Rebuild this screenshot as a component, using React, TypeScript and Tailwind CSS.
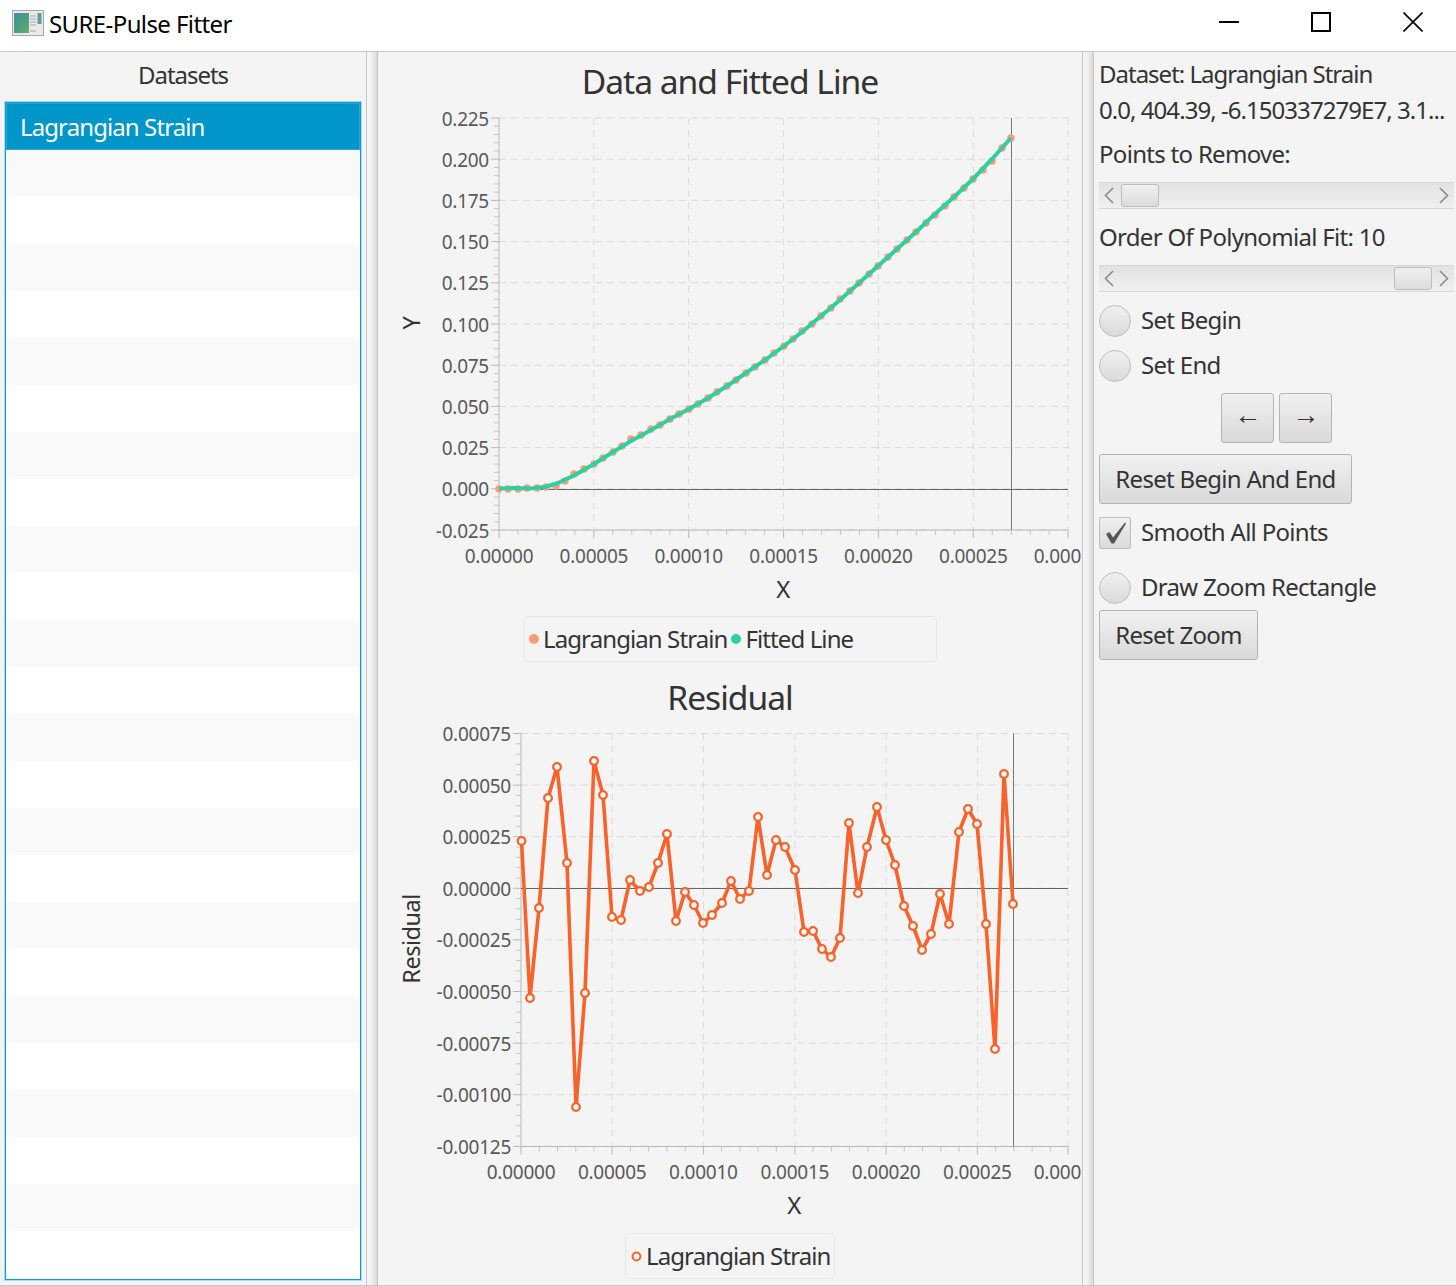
import React from "react";

const residual: [number, number][] = [
  [521.5, 841], [530, 998], [539, 908], [548, 798], [557, 767], [567, 863], [576, 1107], [585, 993],
  [594, 761], [603, 795], [612, 917], [621, 920], [630, 880], [640, 891], [649, 887], [658, 863],
  [667, 834], [676, 921], [685, 892], [694, 905], [703, 923], [712, 915], [722, 903], [731, 881],
  [740, 899], [749, 891], [758, 817], [767, 875], [776, 840], [785, 847], [795, 870], [804, 932],
  [813, 931], [822, 949], [831, 957], [840, 938], [849, 823], [858, 893], [867, 847], [877, 807],
  [886, 840], [895, 865], [904, 906], [913, 926], [922, 950], [931, 934], [940, 894], [949, 924],
  [959, 832], [968, 809], [977, 824], [986, 924], [995, 1049], [1004, 774], [1013, 904],
];

const strain: [number, number][] = [
  [499, 489], [508, 489], [518, 489], [527, 488], [537, 488], [546, 487], [556, 486], [565, 481],
  [574, 474], [584, 469], [594, 464], [603, 458], [613, 452], [622, 446], [631, 439], [641, 435],
  [651, 429], [660, 425], [670, 419], [679, 414], [689, 409], [698, 404], [708, 398], [717, 392],
  [727, 386], [736, 380], [746, 373], [755, 367], [765, 360], [774, 353], [784, 346], [793, 339],
  [802, 331], [812, 324], [821, 316], [831, 308], [840, 299], [850, 291], [859, 283], [869, 274],
  [878, 266], [888, 257], [897, 249], [907, 240], [916, 232], [926, 223], [935, 215], [945, 206],
  [954, 197], [964, 188], [973, 179], [983, 170], [992, 161], [1002, 148], [1011, 138],
];

const fitted: [number, number][] = [
  [499, 488.5], [515, 488], [530, 488.5], [545, 487], [558, 483], [575, 475], [594, 464], [613, 452],
  [631, 441], [651, 430], [670, 419], [689, 409], [708, 398], [727, 386], [746, 373], [765, 360],
  [784, 346], [802, 332], [821, 316], [840, 300], [859, 283], [878, 266], [897, 249], [916, 232],
  [935, 214], [954, 197], [973, 179], [992, 159], [1011, 138],
];

const toPoints = (pts: [number, number][]) => pts.map((p) => p.join(",")).join(" ");

type ChartProps = {
  viewBox: string;
  left: number;
  top: number;
  bottom: number;
  xTicks: number[];
  xLabels: string[];
  yTicks: number[];
  yLabels: string[];
  zeroY: number;
  markerX: number;
  xLabelX: number;
  xLabelY: number;
  yTitle: string;
  yTitleY: number;
  children: React.ReactNode;
};

const RIGHT = 1068;

function Chart(props: ChartProps) {
  const { left, top, bottom, xTicks, yTicks } = props;
  const xStep = (xTicks[1] - xTicks[0]) / 5;
  const yStep = (yTicks[1] - yTicks[0]) / 5;
  return (
    <svg viewBox={props.viewBox} className="block w-[703px] h-[510px] overflow-hidden">
      {/* grid */}
      {yTicks.map((y) => (
        <line key={y} x1={left} x2={RIGHT} y1={y} y2={y} stroke="#dadada" strokeDasharray="7 5" />
      ))}
      {xTicks.slice(1).map((x) => (
        <line key={x} x1={x} x2={x} y1={top} y2={bottom} stroke="#dadada" strokeDasharray="7 5" />
      ))}
      {/* axes */}
      <line x1={left} x2={left} y1={top} y2={bottom} stroke="#b8b8b8" />
      <line x1={left} x2={RIGHT} y1={bottom} y2={bottom} stroke="#b8b8b8" />
      {yTicks.map((y, i) => (
        <g key={y}>
          <line x1={left - 8} x2={left} y1={y} y2={y} stroke="#b8b8b8" />
          {i < yTicks.length - 1 &&
            [1, 2, 3, 4].map((n) => (
              <line key={n} x1={left - 5} x2={left} y1={y + yStep * n} y2={y + yStep * n} stroke="#c4c4c4" />
            ))}
          <text x={left - 10} y={y + 7.5} textAnchor="end" className="fill-[#595959] text-[19px] tracking-[-0.25px]">
            {props.yLabels[i]}
          </text>
        </g>
      ))}
      {xTicks.map((x, i) => (
        <g key={x}>
          <line x1={x} x2={x} y1={bottom} y2={bottom + 8} stroke="#b8b8b8" />
          {i < xTicks.length - 1 &&
            [1, 2, 3, 4].map((n) => (
              <line key={n} x1={x + xStep * n} x2={x + xStep * n} y1={bottom} y2={bottom + 5} stroke="#c4c4c4" />
            ))}
          <text x={x} y={bottom + 32.6} textAnchor="middle" className="fill-[#595959] text-[19px] tracking-[-0.25px]">
            {props.xLabels[i]}
          </text>
        </g>
      ))}
      {/* zero lines */}
      <line x1={left} x2={RIGHT} y1={props.zeroY} y2={props.zeroY} stroke="#666666" />
      <line x1={props.markerX} x2={props.markerX} y1={top} y2={bottom} stroke="#777777" />
      <text x={props.xLabelX} y={props.xLabelY} textAnchor="middle" className="fill-[#333333] text-[24px]">
        X
      </text>
      <text
        transform={`rotate(-90 420 ${props.yTitleY})`}
        x={420}
        y={props.yTitleY}
        textAnchor="middle"
        className="fill-[#333333] text-[23.5px] tracking-[-0.5px]"
      >
        {props.yTitle}
      </text>
      {props.children}
    </svg>
  );
}

function ScrollBar({ thumbRight }: { thumbRight?: boolean }) {
  return (
    <div className="flex items-center h-[27px] border-y border-[#d6d6d6] bg-linear-to-b from-[#e2e2e2] to-[#f0f0f0]">
      <svg width="22" height="25" viewBox="0 0 22 25" className="shrink-0">
        <path d="M14 5 L6.5 12.5 L14 20" fill="none" stroke="#8a8a8a" strokeWidth="1.6" />
      </svg>
      <div className={`flex-1 flex ${thumbRight ? "justify-end" : "justify-start"}`}>
        <div className="w-[38px] h-[23px] rounded-[3px] border border-[#bdbdbd] bg-linear-to-b from-[#f0f0f0] to-[#dcdcdc]" />
      </div>
      <svg width="22" height="25" viewBox="0 0 22 25" className="shrink-0">
        <path d="M8 5 L15.5 12.5 L8 20" fill="none" stroke="#8a8a8a" strokeWidth="1.6" />
      </svg>
    </div>
  );
}

function Radio({ label, className }: { label: string; className: string }) {
  return (
    <div className={`flex items-center h-[32px] gap-[10px] ${className}`}>
      <div className="w-[32px] h-[32px] rounded-full border border-[#c0c0c0] bg-linear-to-b from-[#f0f0f0] to-[#dadada]" />
      <span className="pb-[2px]">{label}</span>
    </div>
  );
}

function FxButton({ children, className }: { children: React.ReactNode; className: string }) {
  return (
    <div
      className={`flex items-center justify-center h-[50px] rounded-[3px] border border-[#b4b4b4] bg-linear-to-b from-[#f1f1f1] to-[#d9d9d9] ${className}`}
    >
      {children}
    </div>
  );
}

function Divider() {
  return (
    <div className="w-[12px] shrink-0 border-x border-[#c6c6c6] bg-linear-to-r from-[#f7f7f7] via-[#efefef] to-[#d9d9d9]" />
  );
}

export default function App() {
  const rows = Array.from({ length: 24 }, (_, i) => i);
  return (
    <div className="flex flex-col w-[1456px] h-[1286px] overflow-hidden bg-[#f4f4f4] text-[24px] tracking-[-0.7px] text-[#333333] font-['Noto_Sans',sans-serif]">
      {/* Title bar */}
      <div className="flex items-center h-[52px] shrink-0 bg-white border-b border-[#c8c8c8] pl-[12px] pr-[33px]">
        <svg width="32" height="26" viewBox="0 0 32 26" className="shrink-0 -mt-[5px]">
          <defs>
            <linearGradient id="appIcon" x1="0" y1="0" x2="1" y2="1">
              <stop offset="0" stopColor="#3f8fa8" />
              <stop offset="0.6" stopColor="#4f9f78" />
              <stop offset="1" stopColor="#6fae62" />
            </linearGradient>
          </defs>
          <rect x="0.5" y="0.5" width="31" height="25" fill="#e9e9e9" stroke="#a9a9a9" />
          <rect x="2" y="3" width="15" height="20" fill="url(#appIcon)" />
          <path d="M18 6h6M18 9h6M18 12h6M18 15h6M18 21h6" stroke="#bdbdbd" strokeWidth="1.4" />
          <rect x="25.5" y="3" width="4" height="11" fill="#5f9e98" />
        </svg>
        <span className="ml-[5px] text-black -mt-[4px] tracking-[-0.6px]">SURE-Pulse Fitter</span>
        <div className="flex items-center gap-[72px] ml-auto -mt-[7px]">
          <svg width="20" height="20" viewBox="0 0 20 20">
            <line x1="0" x2="20" y1="10" y2="10" stroke="#000" strokeWidth="2" />
          </svg>
          <svg width="20" height="20" viewBox="0 0 20 20">
            <rect x="1" y="1" width="18" height="18" fill="none" stroke="#000" strokeWidth="2" />
          </svg>
          <svg width="20" height="20" viewBox="0 0 20 20">
            <path d="M0.5 0.5 L19.5 19.5 M19.5 0.5 L0.5 19.5" stroke="#000" strokeWidth="1.6" />
          </svg>
        </div>
      </div>

      <div className="flex flex-1 min-h-0 border-b border-[#c8c8c8]">
        {/* Datasets */}
        <div className="flex flex-col w-[366px] shrink-0 px-[5px]">
          <div className="flex items-center justify-center h-[50px] pb-[4px] tracking-[-1.05px]">Datasets</div>
          <div className="flex flex-col h-[1178px] bg-white border border-[#039ed3] shadow-[0_0_0_1px_#a9dcf0] w-[356px]">
            <div className="flex items-center h-[47px] shrink-0 pl-[13px] bg-[#0096c9] border border-[#2aa8d2] text-white tracking-[-0.9px]">
              Lagrangian Strain
            </div>
            {rows.map((i) => (
              <div key={i} className={`h-[47px] shrink-0 ${i % 2 === 0 ? "bg-[#f9f9f9]" : "bg-white"}`} />
            ))}
          </div>
        </div>

        <Divider />

        {/* Charts */}
        <div className="flex flex-col w-[704px] shrink-0">
          <div className="flex items-center justify-center h-[48px] pt-[10px] text-[33.6px] tracking-[-1px]">Data and Fitted Line</div>
          <Chart
            viewBox="378 100 703 510"
            left={499}
            top={118}
            bottom={530}
            xTicks={[499, 593.9, 688.7, 783.6, 878.4, 973.3, 1068]}
            xLabels={["0.00000", "0.00005", "0.00010", "0.00015", "0.00020", "0.00025", "0.00030"]}
            yTicks={[118, 159.2, 200.4, 241.6, 282.8, 324, 365.2, 406.4, 447.6, 488.8, 530]}
            yLabels={["0.225", "0.200", "0.175", "0.150", "0.125", "0.100", "0.075", "0.050", "0.025", "0.000", "-0.025"]}
            zeroY={489.5}
            markerX={1011.5}
            xLabelX={783}
            xLabelY={598}
            yTitle="Y"
            yTitleY={323}
          >
            {strain.map(([x, y]) => (
              <circle key={x} cx={x} cy={y} r="3.7" fill="#ff9a78" />
            ))}
            <polyline points={toPoints(fitted)} fill="none" stroke="#2dd0a0" strokeWidth="4" strokeLinejoin="round" />
          </Chart>
          <div className="flex items-center self-center w-[414px] h-[46px] mt-[6px] pl-[5px] gap-[4px] rounded-[5px] border border-[#e6e6e6] whitespace-nowrap">
            <div className="w-[10px] h-[10px] rounded-full bg-[#ff9a78]" />
            <span className="tracking-[-0.9px]">Lagrangian Strain</span>
            <div className="w-[10px] h-[10px] rounded-full bg-[#2dd0a0]" />
            <span className="tracking-[-0.9px]">Fitted Line</span>
          </div>
          <div className="flex items-center justify-center h-[54px] pt-[17px] text-[33.6px] tracking-[-1px]">Residual</div>
          <Chart
            viewBox="378 716 703 510"
            left={521}
            top={733.5}
            bottom={1146.5}
            xTicks={[521, 612.2, 703.4, 794.9, 886.1, 977.4, 1068]}
            xLabels={["0.00000", "0.00005", "0.00010", "0.00015", "0.00020", "0.00025", "0.00030"]}
            yTicks={[733.5, 785.1, 836.7, 888.3, 939.9, 991.5, 1043.1, 1094.7, 1146.3]}
            yLabels={["0.00075", "0.00050", "0.00025", "0.00000", "-0.00025", "-0.00050", "-0.00075", "-0.00100", "-0.00125"]}
            zeroY={888.5}
            markerX={1013.5}
            xLabelX={794}
            xLabelY={1214}
            yTitle="Residual"
            yTitleY={939}
          >
            <polyline points={toPoints(residual)} fill="none" stroke="#f9622b" strokeWidth="3.6" strokeLinejoin="round" />
            {residual.map(([x, y]) => (
              <circle key={x} cx={x} cy={y} r="3.8" fill="#ffffff" stroke="#f9622b" strokeWidth="2.3" />
            ))}
          </Chart>
          <div className="flex items-center self-center w-[210px] h-[46px] mt-[7px] pl-[5px] gap-[4px] rounded-[5px] border border-[#e6e6e6] whitespace-nowrap">
            <svg width="11" height="11" viewBox="0 0 11 11" className="shrink-0">
              <circle cx="5.5" cy="5.5" r="3.9" fill="#fff" stroke="#f9622b" strokeWidth="2" />
            </svg>
            <span className="tracking-[-0.9px]">Lagrangian Strain</span>
          </div>
        </div>

        <Divider />

        {/* Controls */}
        <div className="flex flex-col w-[362px] shrink-0 pl-[5px] pr-[2px] pt-[6px]">
          <div className="flex items-center h-[35px] pb-[3px] tracking-[-1px]">Dataset: Lagrangian Strain</div>
          <div className="flex items-center h-[35px] pb-[2px] whitespace-nowrap tracking-[-0.95px]">0.0, 404.39, -6.150337279E7, 3.1...</div>
          <div className="flex items-center h-[34px] mt-[10px] pb-[2px]">Points to Remove:</div>
          <div className="mt-[10px]">
            <ScrollBar />
          </div>
          <div className="flex items-center h-[34px] mt-[12px] pb-[2px]">Order Of Polynomial Fit: 10</div>
          <div className="mt-[10px]">
            <ScrollBar thumbRight />
          </div>
          <Radio label="Set Begin" className="mt-[13px]" />
          <Radio label="Set End" className="mt-[13px]" />
          <div className="flex justify-center gap-[5px] mt-[11px]">
            <FxButton className="w-[53px] text-[27px] pb-[8px]">←</FxButton>
            <FxButton className="w-[53px] text-[27px] pb-[8px]">→</FxButton>
          </div>
          <FxButton className="w-[253px] mt-[11px]">Reset Begin And End</FxButton>
          <div className="flex items-center h-[32px] gap-[10px] mt-[13px]">
            <div className="flex items-center justify-center w-[32px] h-[32px] rounded-[2px] border border-[#bdbdbd] bg-linear-to-b from-[#f0f0f0] to-[#dadada]">
              <svg width="24" height="24" viewBox="0 0 24 24">
                <path d="M3 13 L6.5 11 L10 16.5 L22 1.5 L23 2.5 L11 22.5 L8.5 22.5 Z" fill="#555555" />
              </svg>
            </div>
            <span className="pb-[2px]">Smooth All Points</span>
          </div>
          <Radio label="Draw Zoom Rectangle" className="mt-[23px]" />
          <FxButton className="w-[159px] mt-[6px]">Reset Zoom</FxButton>
        </div>
      </div>
    </div>
  );
}
